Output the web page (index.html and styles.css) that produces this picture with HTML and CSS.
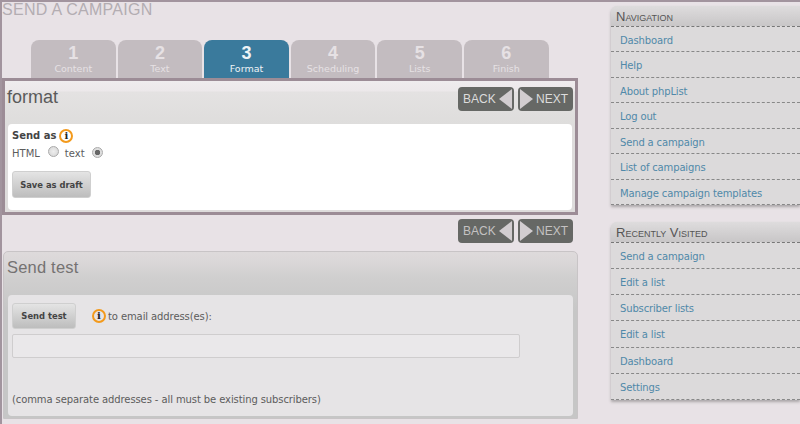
FILE: index.html
```html
<!DOCTYPE html>
<html lang="en">
<head>
<meta charset="utf-8">
<title>Send a campaign</title>
<link rel="stylesheet" href="styles.css">
</head>
<body>
<div class="page">
  <main class="main">
    <h1 class="title">Send a campaign</h1>
    <nav class="tabs">
      <a class="tab"><b>1</b><span>Content</span></a>
      <a class="tab"><b>2</b><span>Text</span></a>
      <a class="tab active"><b>3</b><span>Format</span></a>
      <a class="tab"><b>4</b><span>Scheduling</span></a>
      <a class="tab"><b>5</b><span>Lists</span></a>
      <a class="tab"><b>6</b><span>Finish</span></a>
    </nav>
    <section class="format">
      <header class="format-head">
        <h2>format</h2>
        <div class="pager">
          <a class="pg back">BACK<svg width="15" height="22" viewBox="0 0 15 22"><path d="M14 1V21L1 11Z"/></svg></a>
          <a class="pg next"><svg width="15" height="22" viewBox="0 0 15 22"><path d="M1 1V21L14 11Z"/></svg>NEXT</a>
        </div>
      </header>
      <div class="format-body">
        <div class="send-as"><strong>Send as</strong><span class="info">i</span></div>
        <div class="radios">
          <label>HTML</label><span class="radio"></span>
          <label>text</label><span class="radio on"></span>
        </div>
        <button class="btn draft">Save as draft</button>
      </div>
    </section>
    <div class="pager lower">
      <a class="pg back">BACK<svg width="15" height="22" viewBox="0 0 15 22"><path d="M14 1V21L1 11Z"/></svg></a>
      <a class="pg next"><svg width="15" height="22" viewBox="0 0 15 22"><path d="M1 1V21L14 11Z"/></svg>NEXT</a>
    </div>
    <section class="test">
      <h2>Send test</h2>
      <div class="test-body">
        <div class="test-row">
          <button class="btn send">Send test</button>
          <span class="info">i</span>
          <span class="to">to email address(es):</span>
        </div>
        <div class="field"></div>
        <p class="hint">(comma separate addresses - all must be existing subscribers)</p>
      </div>
    </section>
  </main>
  <aside class="side">
    <section class="menu">
      <h3>Navigation</h3>
      <a>Dashboard</a><a>Help</a><a>About phpList</a><a>Log out</a><a>Send a campaign</a><a>List of campaigns</a><a>Manage campaign templates</a>
    </section>
    <section class="menu recent">
      <h3>Recently Visited</h3>
      <a>Send a campaign</a><a>Edit a list</a><a>Subscriber lists</a><a>Edit a list</a><a>Dashboard</a><a>Settings</a>
    </section>
  </aside>
</div>
</body>
</html>
```
FILE: styles.css
```css
* { box-sizing: border-box; }
html, body { margin: 0; height: 424px; overflow: hidden; }
body { background: #e8e2e6; font-family: "DejaVu Sans", sans-serif; font-size: 10px; color: #5c5c5c; }
.page { display: flex; height: 424px; border-top: 2px solid #a2949e; border-left: 2px solid #a2949e; }
.main { width: 577px; flex: none; }
.title { margin: 0; height: 38px; font: 400 16px/15px "Liberation Sans", sans-serif; letter-spacing: .28px; text-transform: uppercase; color: #b3adb2; }
.tabs { display: flex; gap: 2px; padding-left: 29px; height: 38px; }
.tab { width: 84.6px; height: 38px; border-radius: 8px 8px 0 0; background: #c3bcc0; color: #e6e1e4; display: flex; flex-direction: column; align-items: center; }
.tab b { font: 700 18px/20px "Liberation Sans", sans-serif; margin-top: 3px; }
.tab span { font: 400 9.5px/12px "DejaVu Sans", sans-serif; }
.tab.active { background: #3a7a9c; color: #eef3f6; }
.format { height: 137px; border: 3px solid #9c8c96; padding: 0 3px; width: 576px; background: #dedcdc; }
.format-head { height: 43px; margin: 0 -3px; padding: 6px 2px 0 2px; display: flex; justify-content: space-between; background: linear-gradient(#efecee 0, #ece8ea 10px, #e4e2e2 11px, #dedddc 100%); }
.format-head h2 { margin: 0; font: 400 18px/20px "Liberation Sans", sans-serif; color: #5a5a5a; }
.format-body { height: 86px; background: #fff; border-radius: 4px; padding: 5px 4px; }
.pager { display: flex; gap: 4px; }
.pg { width: 56px; height: 24px; border-radius: 4px; background: #666865; color: #dcdcdc; font: 400 12px/24px "Liberation Sans", sans-serif; display: flex; align-items: center; justify-content: space-between; padding: 0 1px 0 5px; }
.pg svg { fill: #d2cdd0; flex: none; }
.pg.next { padding: 0 5px 0 1px; width: 55px; }
.pager.lower { justify-content: flex-end; margin-top: 4px; padding-right: 6px; height: 24px; }
.lower .pg { color: #c4c2c2; }
.send-as { display: flex; align-items: center; gap: 3px; height: 13px; }
.send-as strong { font-size: 10px; color: #444; }
.info { width: 14px; height: 14px; border: 2px solid #f39a1c; border-radius: 50%; background: #fff; color: #222; font: 700 10px/10px "DejaVu Serif", serif; text-align: center; flex: none; }
.radios { display: flex; align-items: center; height: 16px; margin-top: 3px; }
.radios label { font-size: 10px; color: #5c5c5c; }
.radio { width: 11px; height: 11px; border-radius: 50%; border: 1px solid #aaa; background: radial-gradient(#eee, #d4d4d4); margin: -3px 6px 0 8px; }
.radio.on { background: radial-gradient(#666 0 2.5px, #ddd 3px); margin: -1px 0 0 7px; }
.btn { display: block; border: 1px solid #cfcfcf; border-radius: 3px; background: linear-gradient(#e4e4e4, #bdbdbd); font: 700 8.4px "DejaVu Sans", sans-serif; color: #444; padding: 0; }
.draft { width: 79px; height: 27px; margin-top: 10px; }
.test { margin-top: 8px; height: 168px; width: 575px; margin-left: 1px; border: 1px solid #c8c4c6; border-radius: 5px 5px 0 0; padding: 0 4px; background: linear-gradient(#dedadb 0, #dad7d8 10px, #d0cfcf 25px, #c6c6c6 60px); }
.test h2 { margin: 0 0 0 -1px; height: 43px; font: 400 16.5px/31px "Liberation Sans", sans-serif; letter-spacing: .2px; color: #757272; }
.test-body { height: 121px; background: #e6e4e6; border-radius: 4px; padding: 8px 4px 0; }
.test-row { display: flex; align-items: center; height: 26px; }
.send { width: 64px; height: 26px; }
.test-row .info { margin-left: 16px; background: transparent; }
.to { margin-left: 2px; letter-spacing: -.1px; }
.field { width: 508px; height: 24px; margin-top: 5px; border: 1px solid #cfcdce; border-radius: 2px; background: #eae8ea; }
.hint { margin: 36px 0 0; letter-spacing: -.1px; }
.side { flex: 1; padding: 4px 0 0 32px; }
.menu { margin-bottom: 17px; background: #dcdadb; border-radius: 6px 0 0 0; box-shadow: 0 2px 3px #aaa6a8; }
.menu h3 { margin: 0; height: 21px; padding-left: 5px; border-bottom: 1px dashed #777; font: 400 13px/21px "Liberation Sans", sans-serif; font-variant: small-caps; color: #555; background: linear-gradient(#dedcdd, #c8c6c7); border-radius: 6px 0 0 0; }
.menu a { display: block; height: 25.45px; padding-left: 9px; border-bottom: 1px dashed #888; line-height: 27px; letter-spacing: -.15px; color: #5089a9; }
.recent a { height: 26.15px; line-height: 28px; }
```
